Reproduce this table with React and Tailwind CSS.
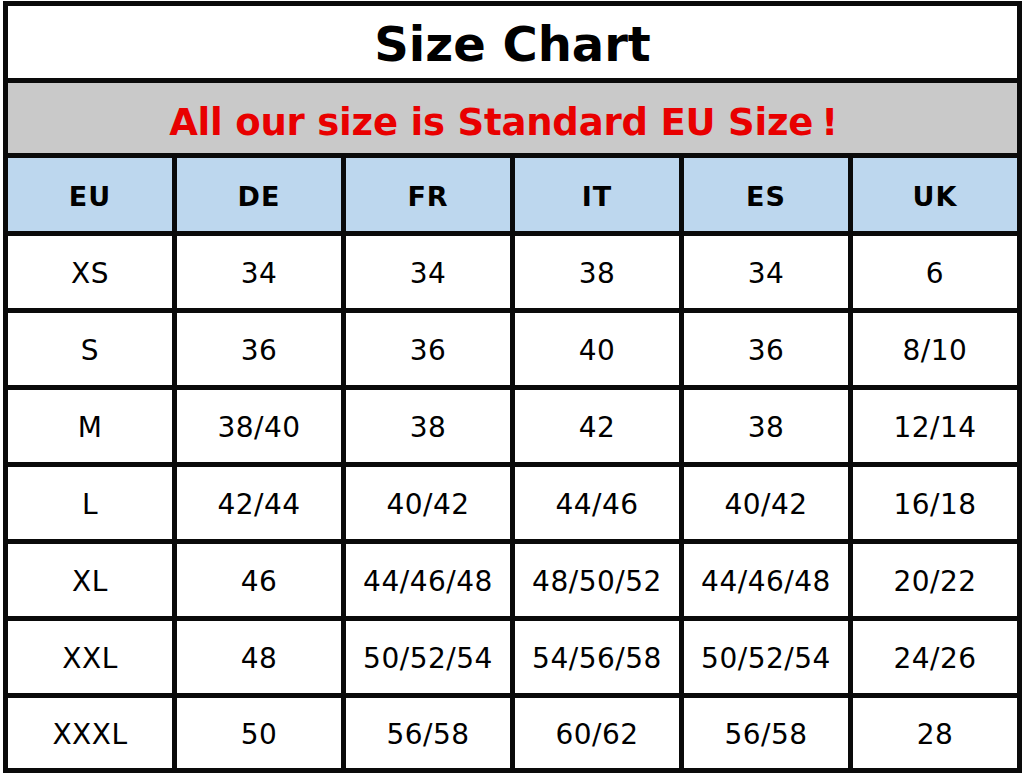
import React from 'react';

const headers = ['EU', 'DE', 'FR', 'IT', 'ES', 'UK'];

const rows = [
  ['XS', '34', '34', '38', '34', '6'],
  ['S', '36', '36', '40', '36', '8/10'],
  ['M', '38/40', '38', '42', '38', '12/14'],
  ['L', '42/44', '40/42', '44/46', '40/42', '16/18'],
  ['XL', '46', '44/46/48', '48/50/52', '44/46/48', '20/22'],
  ['XXL', '48', '50/52/54', '54/56/58', '50/52/54', '24/26'],
  ['XXXL', '50', '56/58', '60/62', '56/58', '28'],
];

export default function App() {
  return (
    <div className="w-[1024px] h-[775px] bg-white pt-[1px] pl-[3px] font-['DejaVu_Sans',sans-serif] text-black">
      <div className="w-[1019px] bg-[#0a0a0a] p-[5px] flex flex-col gap-[5px]">
        <div className="h-[72px] bg-white flex items-center justify-center pt-[4px]">
          <h1 className="text-[48px] font-bold leading-none">Size Chart</h1>
        </div>
        <div className="h-[70px] bg-[#c9c9c9] flex items-center justify-center pt-[8px] pr-[18px]">
          <p className="text-[37px] font-bold leading-none text-[#e80000] tracking-[-0.2px]">
            All our size is Standard EU Size<span className="ml-[8px]">!</span>
          </p>
        </div>
        <div className="grid grid-cols-6 gap-[5px] h-[73px]">
          {headers.map((h) => (
            <div key={h} className="bg-[#bdd7ee] flex items-center justify-center pt-[6px] text-[27px] font-bold tracking-[1px]">
              {h}
            </div>
          ))}
        </div>
        {rows.map((row, r) => (
          <div key={row[0]} className={`grid grid-cols-6 gap-[5px] ${r === 6 ? 'h-[70px]' : 'h-[72px]'}`}>
            {row.map((cell, i) => (
              <div key={i} className="bg-white flex items-center justify-center pt-[4px] text-[28px] tracking-[0.5px]">
                {cell}
              </div>
            ))}
          </div>
        ))}
      </div>
    </div>
  );
}
